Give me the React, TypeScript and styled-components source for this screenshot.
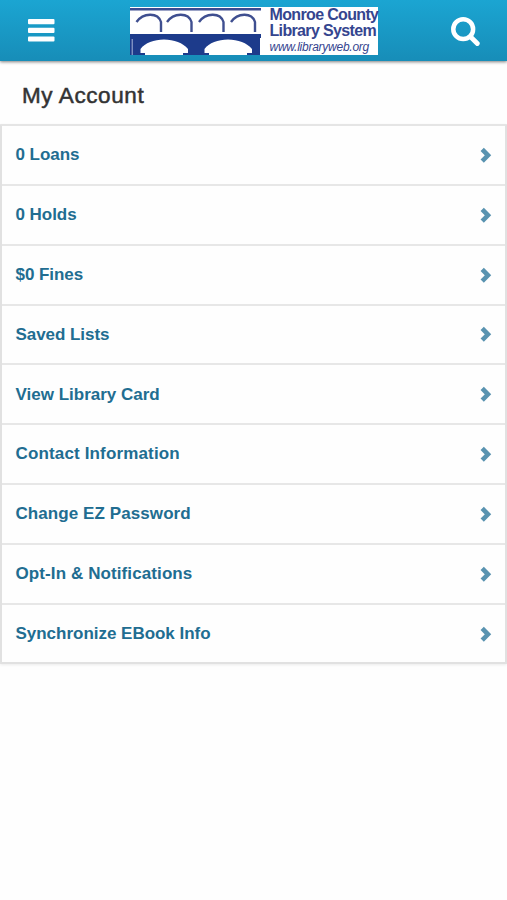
import React from "react";
import styled, { createGlobalStyle } from "styled-components";

const GlobalStyle = createGlobalStyle`
  * { box-sizing: border-box; }
  body { margin: 0; background: #fefefe; font-family: "Liberation Sans", Arial, sans-serif; }
`;

const Page = styled.div`
  width: 507px;
  height: 900px;
  overflow: hidden;
  background: #fefefe;
`;

const Header = styled.header`
  height: 61px;
  display: flex;
  justify-content: space-between;
  align-items: flex-start;
  padding: 7px 27px 0 28px;
  background: linear-gradient(#1ba5d2, #178db8);
  box-shadow: 0 1px 3px rgba(0, 0, 0, 0.5);
`;

const IconButton = styled.button<{ $top: number }>`
  display: flex;
  padding: 0;
  border: 0;
  background: none;
  margin-top: ${(p) => p.$top}px;
`;

const Logo = styled.div`
  display: flex;
  width: 248px;
  height: 48px;
  margin-left: 2px;
  background: #fff;
`;

const BridgeArt = styled.svg`
  flex-shrink: 0;
`;

const LogoText = styled.div`
  padding-left: 7.5px;
  color: #35458f;
  white-space: nowrap;
`;

const LogoName = styled.div`
  height: 32px;
  font-size: 16px;
  line-height: 15.5px;
  font-weight: 700;
  letter-spacing: -0.65px;
`;

const LogoUrl = styled.div`
  font-size: 12px;
  line-height: 16px;
  font-style: italic;
  letter-spacing: -0.25px;
`;

const Title = styled.h1`
  margin: 0;
  height: 63px;
  padding: 6px 0 0 22px;
  display: flex;
  align-items: center;
  font-size: 22.5px;
  font-weight: 400;
  letter-spacing: 0.6px;
  color: #333;
  -webkit-text-stroke: 0.5px #333;
`;

const List = styled.nav`
  border: 2px solid #e1e1e1;
  border-top-color: #e5e5e5;
  border-radius: 1px;
  box-shadow: 0 1px 3px rgba(0, 0, 0, 0.08);
`;

const Row = styled.a`
  display: flex;
  align-items: center;
  justify-content: space-between;
  height: 59.85px;
  padding: 0 13px 0 13.5px;
  color: #216d91;
  font-size: 17px;
  font-weight: 700;
  border-bottom: 2px solid #e7e7e7;
  &:last-child { border-bottom: 0; height: 57.5px; }
`;

const Label = styled.span<{ $spacing: number }>`
  letter-spacing: ${(p) => p.$spacing}px;
  padding-top: 0.5px;
  white-space: nowrap;
`;

const rows = [
  { label: "0 Loans", spacing: -0.05 },
  { label: "0 Holds", spacing: -0.05 },
  { label: "$0 Fines", spacing: -0.05 },
  { label: "Saved Lists", spacing: -0.05 },
  { label: "View Library Card", spacing: 0 },
  { label: "Contact Information", spacing: 0.15 },
  { label: "Change EZ Password", spacing: 0.08 },
  { label: "Opt-In & Notifications", spacing: 0.1 },
  { label: "Synchronize EBook Info", spacing: -0.02 },
];

const Bridge = () => (
  <BridgeArt width="132" height="48" viewBox="0 0 132 48" fill="none">
    <path d="M0 2.2H131" stroke="#3a4b90" strokeWidth="2.4" />
    <path
      d="M6.5 15C13 5.500 28 5 31 15V25M37 15C43.500 5.500 58.500 5 61.500 15V25M69 15C75.500 5.500 90.500 5 93.500 15V25M101 15C107.500 5.500 122 5 125 15V25"
      stroke="#3f4f90"
      strokeWidth="2.4"
    />
    <path
      fill="#1d3b8b"
      fillRule="evenodd"
      d="M0 27H131V31H130V48H0V31H0ZM15 48V46H10.500V42C15 36 24 32.500 34 32.500S53 36 58 42V46H53V48ZM79 48V46H74.500V42C79 36 88 32.500 98 32.500S117 36 122 42V46H117V48Z"
    />
    <path d="M2.200 32V48" stroke="#a9b5d9" strokeWidth="1" />
  </BridgeArt>
);

export default function App() {
  return (
    <Page>
      <GlobalStyle />
      <Header>
        <IconButton $top={12} aria-label="Menu">
          <svg width="27" height="23" viewBox="0 0 27 23" fill="#fff">
            <rect width="26.500" height="5.200" rx="1" />
            <rect y="8.700" width="26.500" height="5.200" rx="1" />
            <rect y="17.400" width="26.500" height="5.200" rx="1" />
          </svg>
        </IconButton>
        <Logo>
          <Bridge />
          <LogoText>
            <LogoName>
              Monroe County
              <br />
              Library System
            </LogoName>
            <LogoUrl>www.libraryweb.org</LogoUrl>
          </LogoText>
        </Logo>
        <IconButton $top={10} aria-label="Search">
          <svg width="29" height="30" viewBox="0 0 29 30" fill="none" stroke="#fff">
            <circle cx="12.200" cy="12.200" r="9.900" strokeWidth="4.500" />
            <path d="M19.500 19.700L26.300 26.500" strokeWidth="4.800" strokeLinecap="round" />
          </svg>
        </IconButton>
      </Header>
      <Title>My Account</Title>
      <List>
        {rows.map((r) => (
          <Row key={r.label}>
            <Label $spacing={r.spacing}>{r.label}</Label>
            <svg width="12" height="16" viewBox="0 0 12 16" fill="none">
              <path d="M2.200 2.400L8 8.300L2.200 14.200" stroke="#5993b0" strokeWidth="4.600" />
            </svg>
          </Row>
        ))}
      </List>
    </Page>
  );
}
